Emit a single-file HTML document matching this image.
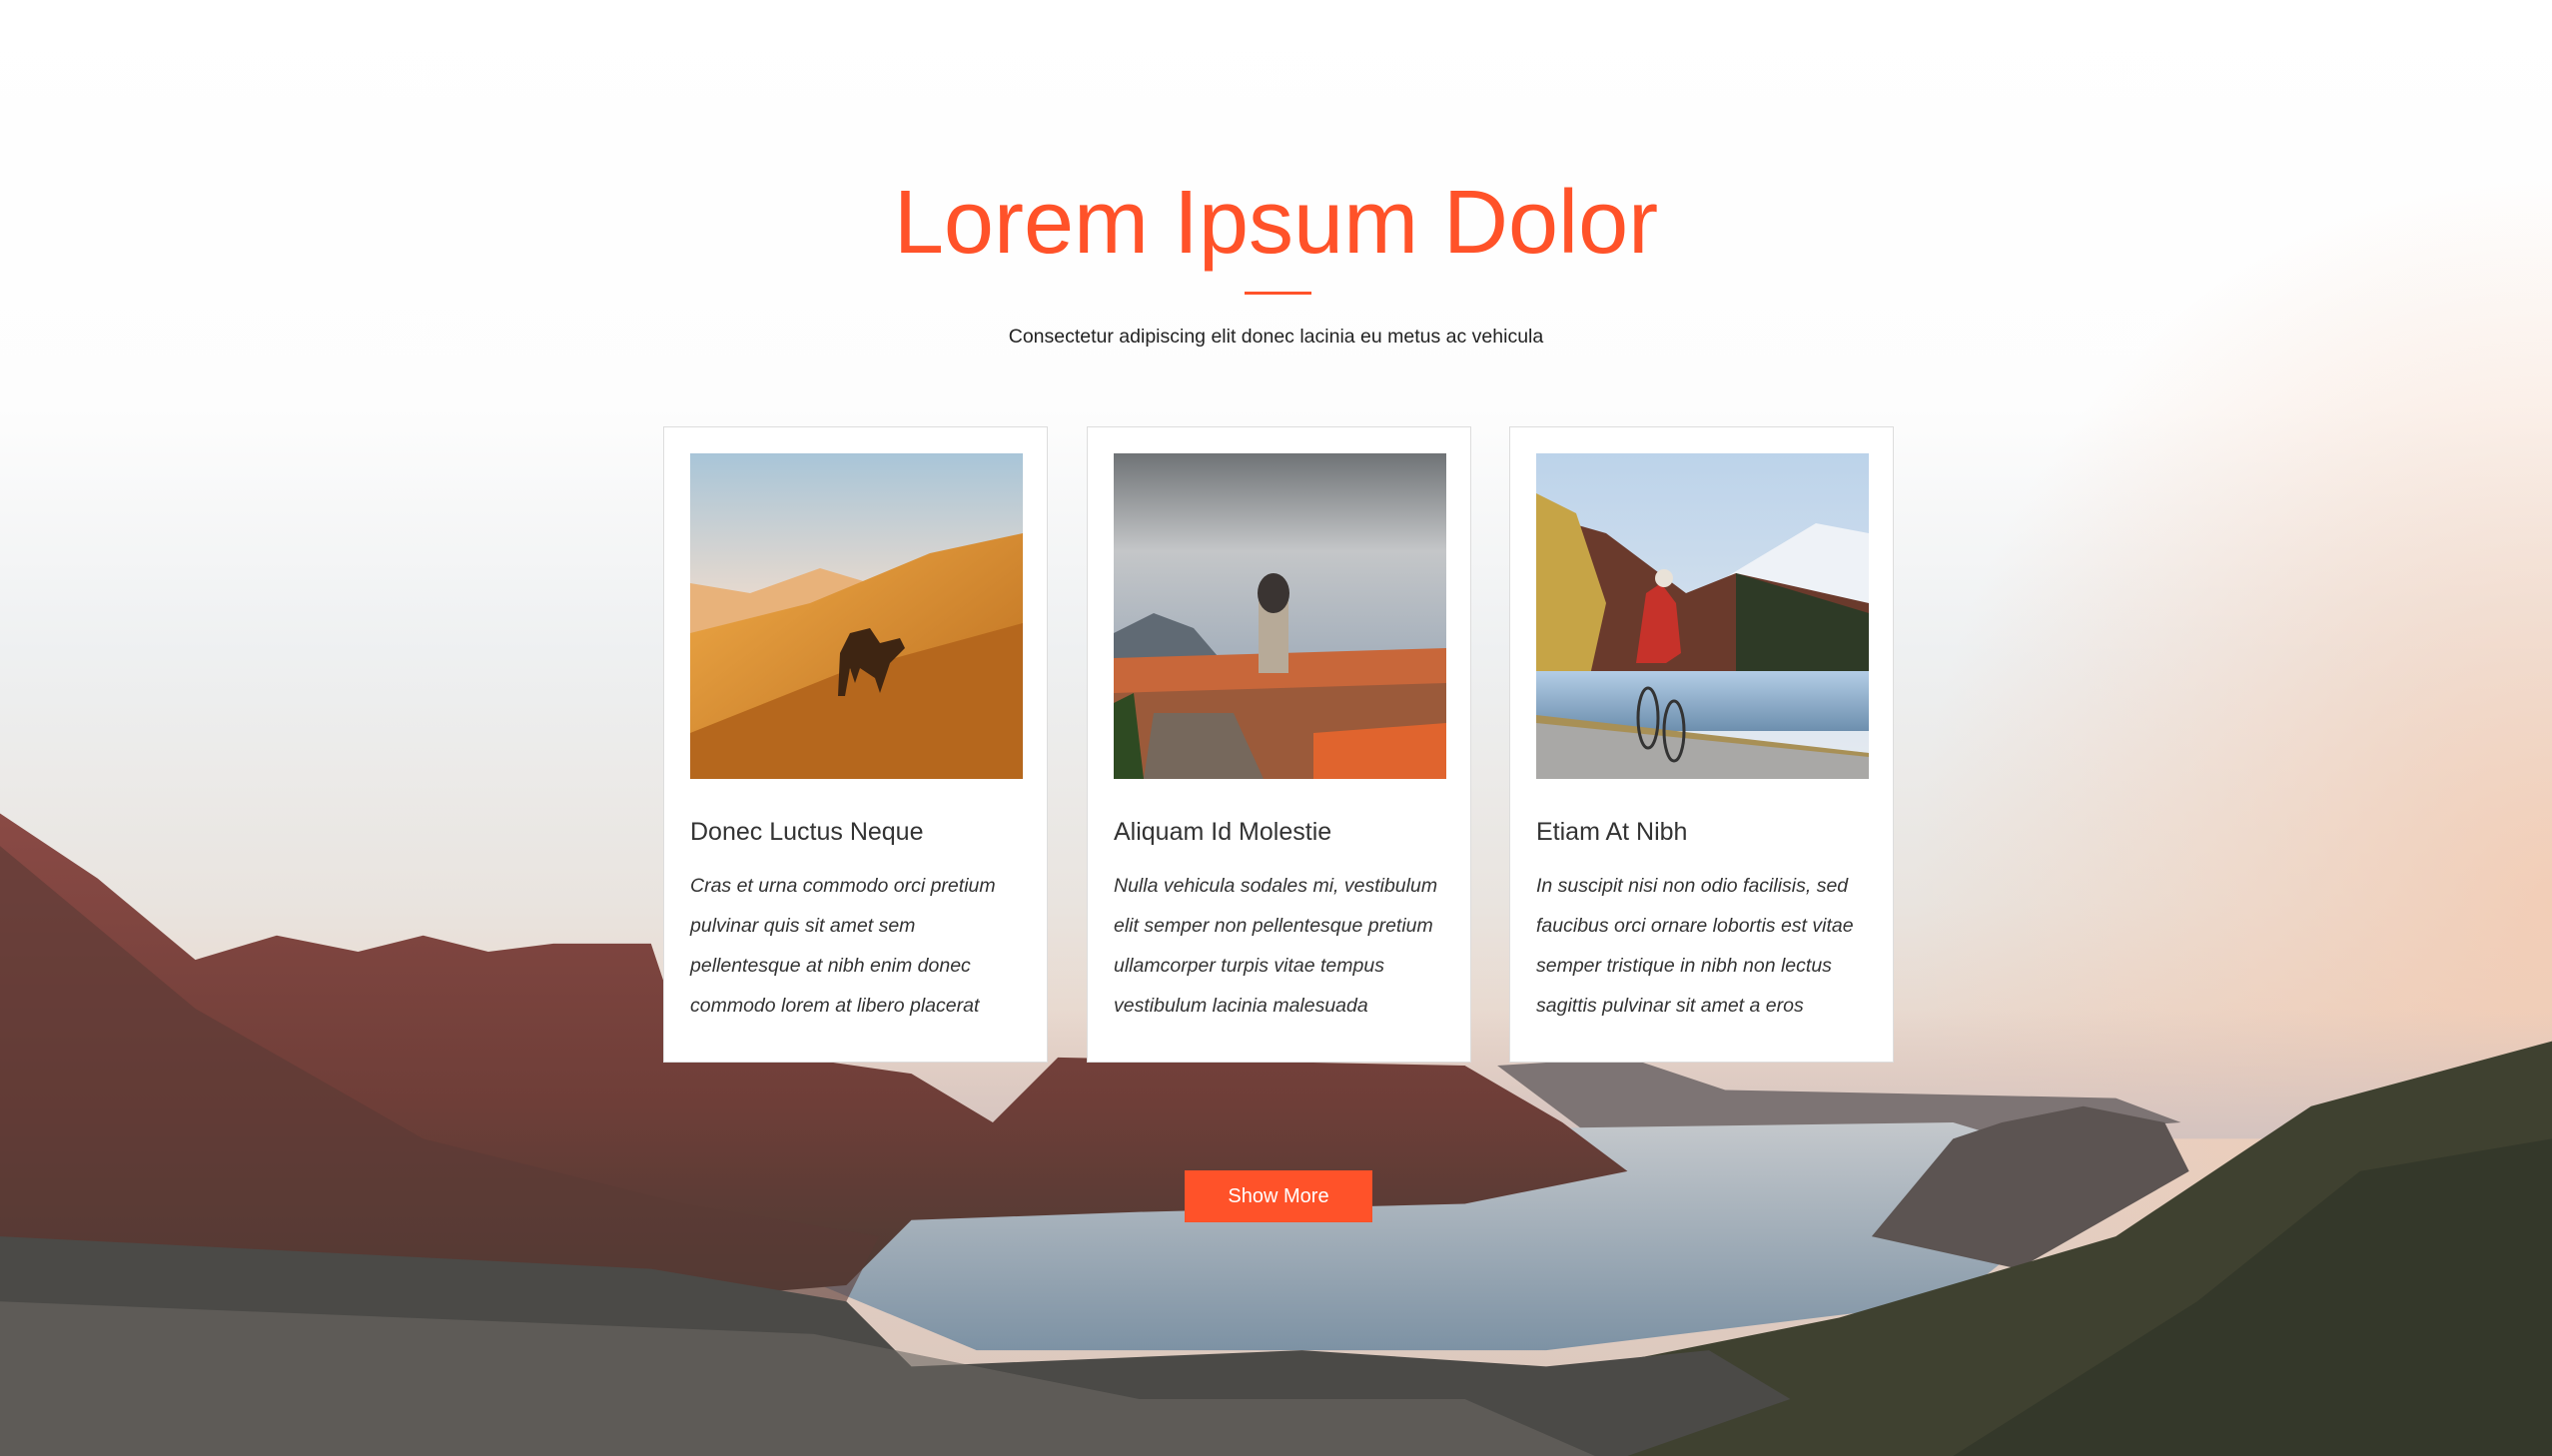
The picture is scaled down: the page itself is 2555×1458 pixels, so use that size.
<!DOCTYPE html>
<html><head><meta charset="utf-8"><style>
*{margin:0;padding:0;box-sizing:border-box}
body{width:2555px;height:1458px;overflow:hidden;position:relative;font-family:"Liberation Sans",Arial,sans-serif;background:#fff}
.bg{position:absolute;left:0;top:0;width:2555px;height:1458px}
h1{position:absolute;left:0;width:2555px;top:168px;text-align:center;font-weight:400;font-size:90px;line-height:110px;color:#ff5229}
.line{position:absolute;left:1246px;top:292px;width:67px;height:3px;background:#ff5229}
.sub{position:absolute;left:0;width:2555px;top:326px;text-align:center;font-size:19.5px;color:#222}
.card{position:absolute;top:427px;width:385px;height:637px;background:#fff;border:1px solid #ddd}
.img{position:absolute;left:26px;top:26px;width:333px;height:326px;overflow:hidden}
.card h3{position:absolute;left:26px;top:391px;font-weight:400;font-size:25px;color:#333}
.card p{position:absolute;left:26px;top:439px;width:340px;font-style:italic;font-size:19.5px;line-height:40px;color:#333}
.btn{position:absolute;left:1186px;top:1172px;width:188px;height:52px;background:#ff5229;color:#fff;font-size:20px;text-align:center;line-height:52px}
</style></head><body>
<svg class="bg" viewBox="0 0 1568 895" preserveAspectRatio="none">
<defs>
<linearGradient id="sky" x1="0" y1="0" x2="0" y2="1">
<stop offset="0" stop-color="#fff"/><stop offset="0.28" stop-color="#fdfdfd"/><stop offset="0.45" stop-color="#eef0f1"/><stop offset="0.62" stop-color="#e9e4df"/><stop offset="0.74" stop-color="#e8d3c6"/><stop offset="1" stop-color="#d9c6bc"/></linearGradient>
<radialGradient id="warm" cx="1" cy="0.62" r="0.5" gradientTransform="translate(0.5 0) scale(0.5 1)"><stop offset="0" stop-color="#f4c8ad" stop-opacity="0.8"/><stop offset="1" stop-color="#f4c8ad" stop-opacity="0"/></radialGradient>
<linearGradient id="rock" x1="0" y1="0" x2="0" y2="1"><stop offset="0" stop-color="#8a4a45"/><stop offset="0.6" stop-color="#6e3e38"/><stop offset="1" stop-color="#4a3a33"/></linearGradient>
<linearGradient id="sea" x1="0" y1="0" x2="0" y2="1"><stop offset="0" stop-color="#c4c8cc"/><stop offset="1" stop-color="#7d92a4"/></linearGradient>
<linearGradient id="hz" x1="0" y1="0" x2="0" y2="1"><stop offset="0" stop-color="#d9c7c2" stop-opacity="0"/><stop offset="1" stop-color="#d4c3bf"/></linearGradient>
</defs>
<rect width="1568" height="895" fill="url(#sky)"/>
<rect width="1568" height="895" fill="url(#warm)"/>
<rect y="620" width="1568" height="80" fill="url(#hz)"/>
<path d="M920 655 L1000 650 L1060 670 L1300 675 L1340 690 L1200 700 L980 700Z" fill="#7d7474"/>
<path d="M480 700 L1200 690 L1300 720 L1200 800 L950 830 L600 830 L480 780Z" fill="url(#sea)"/>
<path d="M0 500 L60 540 L120 590 L170 575 L220 585 L260 575 L300 585 L340 580 L400 580 L420 640 L560 660 L610 690 L650 650 L900 655 L960 690 L1000 720 L900 740 L700 745 L560 750 L520 790 L400 800 L0 800Z" fill="url(#rock)"/>
<path d="M0 520 L120 620 L260 700 L420 740 L540 760 L520 800 L0 800Z" fill="#5a3b35" opacity="0.6"/>
<path d="M1200 700 L1230 690 L1280 680 L1330 690 L1345 720 L1240 780 L1150 760Z" fill="#5c5452"/>
<path d="M1568 640 L1420 680 L1300 760 L1130 810 L980 840 L950 895 L1568 895Z" fill="#3f4130"/>
<path d="M1568 700 L1450 720 L1350 800 L1200 895 L1568 895Z" fill="#34382a"/>
<path d="M0 760 L200 770 L400 780 L520 800 L560 840 L800 830 L950 840 L1050 830 L1100 860 L1000 895 L0 895Z" fill="#4b4a47"/>
<path d="M0 800 L500 820 L700 860 L900 860 L980 895 L0 895Z" fill="#6b6762" opacity="0.6"/>
</svg>
<h1>Lorem Ipsum Dolor</h1>
<div class="line"></div>
<div class="sub">Consectetur adipiscing elit donec lacinia eu metus ac vehicula</div>

<div class="card" style="left:664px">
<svg class="img" viewBox="0 0 333 326" preserveAspectRatio="none">
<defs><linearGradient id="ds" x1="0" y1="0" x2="0" y2="1"><stop offset="0" stop-color="#a8c5d8"/><stop offset="0.5" stop-color="#efdccd"/><stop offset="1" stop-color="#e9b37a"/></linearGradient>
<linearGradient id="dd" x1="0" y1="0" x2="1" y2="1"><stop offset="0" stop-color="#f0ab48"/><stop offset="1" stop-color="#b86a1c"/></linearGradient></defs>
<rect width="333" height="326" fill="url(#ds)"/>
<path d="M0 130 L60 140 L130 115 L180 130 L333 150 L333 326 L0 326Z" fill="#e8b27a"/>
<path d="M0 180 L120 150 L240 100 L333 80 L333 326 L0 326Z" fill="url(#dd)"/>
<path d="M0 280 L150 220 L333 170 L333 326 L0 326Z" fill="#b5671d"/>
<path d="M148 243 L150 200 L160 180 L180 175 L190 190 L210 185 L215 195 L200 210 L190 240 L185 225 L170 215 L165 230 L160 215 L155 243Z" fill="#3e2512"/>
</svg>
<h3>Donec Luctus Neque</h3>
<p>Cras et urna commodo orci pretium pulvinar quis sit amet sem pellentesque at nibh enim donec commodo lorem at libero placerat</p>
</div>

<div class="card" style="left:1088px">
<svg class="img" viewBox="0 0 333 326" preserveAspectRatio="none">
<defs><linearGradient id="cs" x1="0" y1="0" x2="0" y2="1"><stop offset="0" stop-color="#6f7376"/><stop offset="0.3" stop-color="#c4c6c8"/><stop offset="0.6" stop-color="#a8b2bd"/></linearGradient></defs>
<rect width="333" height="326" fill="url(#cs)"/>
<path d="M0 180 L40 160 L80 175 L110 210 L0 220Z" fill="#606a74"/>
<path d="M0 205 L333 195 L333 326 L0 326Z" fill="#c8673a"/>
<path d="M0 240 L333 230 L333 326 L0 326Z" fill="#9b5a3a"/>
<path d="M40 260 L120 260 L150 326 L30 326Z" fill="#76685c"/>
<rect x="145" y="140" width="30" height="80" fill="#b7aa98"/>
<ellipse cx="160" cy="140" rx="16" ry="20" fill="#3a3432"/>
<path d="M0 250 L20 240 L30 326 L0 326Z" fill="#2e4a22"/>
<path d="M200 280 L333 270 L333 326 L200 326Z" fill="#e0642e"/>
</svg>
<h3>Aliquam Id Molestie</h3>
<p>Nulla vehicula sodales mi, vestibulum elit semper non pellentesque pretium ullamcorper turpis vitae tempus vestibulum lacinia malesuada</p>
</div>

<div class="card" style="left:1511px">
<svg class="img" viewBox="0 0 333 326" preserveAspectRatio="none">
<defs><linearGradient id="bs" x1="0" y1="0" x2="0" y2="1"><stop offset="0" stop-color="#bcd3ea"/><stop offset="1" stop-color="#e6ebf1"/></linearGradient>
<linearGradient id="bw" x1="0" y1="0" x2="0" y2="1"><stop offset="0" stop-color="#b3cde6"/><stop offset="1" stop-color="#6d8fae"/></linearGradient></defs>
<rect width="333" height="326" fill="url(#bs)"/>
<path d="M180 130 L280 70 L333 80 L333 200 L180 200Z" fill="#eef2f7"/>
<path d="M0 60 L70 80 L150 140 L200 120 L333 150 L333 220 L0 220Z" fill="#6a3a2c"/>
<path d="M200 120 L333 160 L333 220 L200 220Z" fill="#2e3a26"/>
<path d="M0 40 L40 60 L70 150 L50 240 L0 240Z" fill="#c6a446"/>
<rect y="218" width="333" height="60" fill="url(#bw)"/>
<path d="M0 268 L333 300 L333 326 L0 326Z" fill="#a9a8a6"/>
<path d="M0 262 L333 300 L333 304 L0 270Z" fill="#a89056"/>
<path d="M100 210 L110 140 L125 130 L140 150 L145 200 L130 210Z" fill="#c6322a"/>
<circle cx="128" cy="125" r="9" fill="#e9e2d8"/>
<ellipse cx="112" cy="265" rx="10" ry="30" fill="none" stroke="#333" stroke-width="3"/>
<ellipse cx="138" cy="278" rx="10" ry="30" fill="none" stroke="#333" stroke-width="3"/>
</svg>
<h3>Etiam At Nibh</h3>
<p>In suscipit nisi non odio facilisis, sed faucibus orci ornare lobortis est vitae semper tristique in nibh non lectus sagittis pulvinar sit amet a eros</p>
</div>

<div class="btn">Show More</div>
</body></html>
